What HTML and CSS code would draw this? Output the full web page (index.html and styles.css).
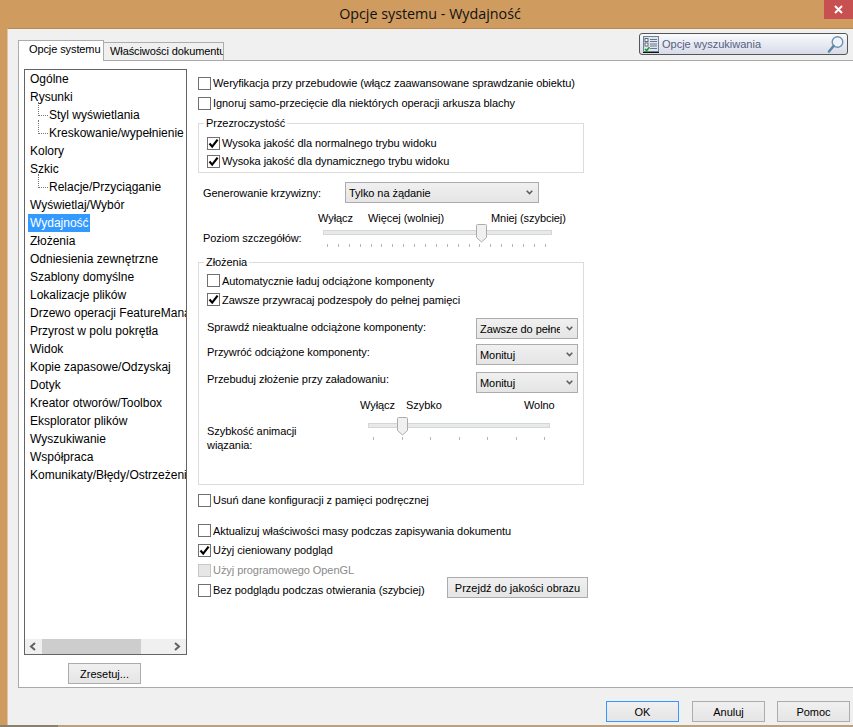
FILE: index.html
```html
<!DOCTYPE html>
<html lang="pl">
<head>
<meta charset="utf-8">
<title>Opcje systemu - Wydajność</title>
<link rel="stylesheet" href="styles.css">
</head>
<body>
<svg class="defs" width="0" height="0" aria-hidden="true">
  <symbol id="tick" viewBox="0 0 13 13"><path d="M2.5 6.5 L5.2 9.6 L10.6 2.6" fill="none" stroke="#000" stroke-width="2.2"/></symbol>
  <symbol id="chev" viewBox="0 0 7 5"><path d="M.7 .7 L3.5 3.6 L6.3 .7" fill="none" stroke="#606060" stroke-width="1.6"/></symbol>
  <symbol id="thumb" viewBox="0 0 11 19"><path d="M.5 1.5 Q.5 .5 1.5 .5 H9.5 Q10.5 .5 10.5 1.5 V13.5 L5.5 18 L.5 13.5 Z" fill="#f0f0f0" stroke="#acacac"/></symbol>
</svg>

<header class="titlebar">
  <h1 class="title">Opcje systemu - Wydajność</h1>
  <button class="close" aria-label="Zamknij"><svg width="9" height="9" viewBox="0 0 9 9"><path d="M1 1 L8 8 M8 1 L1 8" stroke="#fff" stroke-width="2"/></svg></button>
</header>

<div class="window">
  <div class="topbar">
    <div class="tab active">Opcje systemu</div>
    <div class="tab">Właściwości dokumentu</div>
    <div class="search">
      <svg class="search-icon" width="16" height="17" viewBox="0 0 16 17">
        <rect x=".5" y=".5" width="15" height="15" fill="#dfe6ee" stroke="#6d8296"/>
        <rect x="2" y="2.5" width="3" height="3" fill="#fff" stroke="#667"/>
        <rect x="2" y="7" width="3" height="3" fill="#fff" stroke="#667"/>
        <path d="M7 3.5 H14 M7 5.5 H14 M7 8 H14 M7 10 H14 M7 12.5 H14" stroke="#66788a"/>
        <path d="M2 13 L3.6 14.6 L6.4 11.2" fill="none" stroke="#12a02a" stroke-width="1.6"/>
        <path d="M0 16.5 H16" stroke="#111"/>
      </svg>
      <span class="search-text">Opcje wyszukiwania</span>
      <svg class="search-glass" width="17" height="19" viewBox="0 0 17 19">
        <circle cx="10.5" cy="7" r="5.3" fill="#eef4fa" stroke="#6f93ad" stroke-width="1.4"/>
        <path d="M6.6 11 L2 16.5" stroke="#5f86a5" stroke-width="2.6" stroke-linecap="round"/>
      </svg>
    </div>
  </div>

  <div class="panel">
    <div class="side">
      <div class="tree">
        <ul class="tree-list">
          <li>Ogólne</li>
          <li>Rysunki</li>
          <li class="sub">Styl wyświetlania</li>
          <li class="sub">Kreskowanie/wypełnienie</li>
          <li>Kolory</li>
          <li>Szkic</li>
          <li class="sub">Relacje/Przyciąganie</li>
          <li>Wyświetlaj/Wybór</li>
          <li><span class="selected">Wydajność</span></li>
          <li>Złożenia</li>
          <li>Odniesienia zewnętrzne</li>
          <li>Szablony domyślne</li>
          <li>Lokalizacje plików</li>
          <li>Drzewo operacji FeatureManager</li>
          <li>Przyrost w polu pokrętła</li>
          <li>Widok</li>
          <li>Kopie zapasowe/Odzyskaj</li>
          <li>Dotyk</li>
          <li>Kreator otworów/Toolbox</li>
          <li>Eksplorator plików</li>
          <li>Wyszukiwanie</li>
          <li>Współpraca</li>
          <li>Komunikaty/Błędy/Ostrzeżenia</li>
        </ul>
        <div class="hscroll">
          <svg class="arrow" width="8" height="9" viewBox="0 0 8 9"><path d="M6 1 L2 4.5 L6 8" fill="none" stroke="#606060" stroke-width="2"/></svg>
          <div class="track"><div class="thumb-h"></div></div>
          <svg class="arrow" width="8" height="9" viewBox="0 0 8 9"><path d="M2 1 L6 4.5 L2 8" fill="none" stroke="#606060" stroke-width="2"/></svg>
        </div>
      </div>
      <button class="btn reset">Zresetuj...</button>
    </div>

    <div class="options">
      <label class="check"><span class="cb"></span>Weryfikacja przy przebudowie (włącz zaawansowane sprawdzanie obiektu)</label>
      <label class="check"><span class="cb"></span>Ignoruj samo-przecięcie dla niektórych operacji arkusza blachy</label>

      <fieldset class="group g-transp">
        <legend>Przezroczystość</legend>
        <label class="check tight"><span class="cb"><svg width="13" height="13"><use href="#tick"/></svg></span>Wysoka jakość dla normalnego trybu widoku</label>
        <label class="check tight"><span class="cb"><svg width="13" height="13"><use href="#tick"/></svg></span>Wysoka jakość dla dynamicznego trybu widoku</label>
      </fieldset>

      <div class="curve-row">
        <span class="curve-label">Generowanie krzywizny:</span>
        <div class="select wide"><span class="select-text">Tylko na żądanie</span><svg width="7" height="5"><use href="#chev"/></svg></div>
      </div>

      <div class="scale scale-detail">
        <span>Wyłącz</span><span>Więcej (wolniej)</span><span>Mniej (szybciej)</span>
      </div>
      <div class="slider-row detail-row">
        <span class="slider-label">Poziom szczegółów:</span>
        <div class="slider s-detail">
          <div class="rail"></div>
          <svg class="knob" width="11" height="19"><use href="#thumb"/></svg>
          <div class="ticks">
            <i></i><i></i><i></i><i></i><i></i><i></i><i></i><i></i><i></i><i></i><i></i><i></i><i></i><i></i><i></i><i></i><i></i><i></i><i></i><i></i><i></i>
          </div>
        </div>
      </div>

      <fieldset class="group g-asm">
        <legend>Złożenia</legend>
        <label class="check tight2"><span class="cb"></span>Automatycznie ładuj odciążone komponenty</label>
        <label class="check tight2"><span class="cb"><svg width="13" height="13"><use href="#tick"/></svg></span>Zawsze przywracaj podzespoły do pełnej pamięci</label>

        <div class="asm-row r1">
          <span>Sprawdź nieaktualne odciążone komponenty:</span>
          <div class="select"><span class="select-text">Zawsze do pełne</span><svg width="7" height="5"><use href="#chev"/></svg></div>
        </div>
        <div class="asm-row r2">
          <span>Przywróć odciążone komponenty:</span>
          <div class="select"><span class="select-text">Monituj</span><svg width="7" height="5"><use href="#chev"/></svg></div>
        </div>
        <div class="asm-row r3">
          <span>Przebuduj złożenie przy załadowaniu:</span>
          <div class="select"><span class="select-text">Monituj</span><svg width="7" height="5"><use href="#chev"/></svg></div>
        </div>

        <div class="scale scale-anim">
          <span>Wyłącz</span><span>Szybko</span><span>Wolno</span>
        </div>
        <div class="slider-row anim-row">
          <span class="slider-label anim-label">Szybkość animacji<br>wiązania:</span>
          <div class="slider s-anim">
            <div class="rail"></div>
            <svg class="knob" width="11" height="19"><use href="#thumb"/></svg>
            <div class="ticks"><i></i><i></i><i></i><i></i><i></i><i></i><i></i></div>
          </div>
        </div>
      </fieldset>

      <label class="check clear-cache"><span class="cb"></span>Usuń dane konfiguracji z pamięci podręcznej</label>
      <label class="check update-mass"><span class="cb"></span>Aktualizuj właściwości masy podczas zapisywania dokumentu</label>
      <label class="check"><span class="cb"><svg width="13" height="13"><use href="#tick"/></svg></span>Użyj cieniowany podgląd</label>
      <label class="check disabled"><span class="cb"></span>Użyj programowego OpenGL</label>
      <div class="last-row">
        <label class="check"><span class="cb"></span>Bez podglądu podczas otwierania (szybciej)</label>
        <button class="btn quality">Przejdź do jakości obrazu</button>
      </div>
    </div>
  </div>

  <footer class="actions">
    <button class="btn act primary">OK</button>
    <button class="btn act">Anuluj</button>
    <button class="btn act">Pomoc</button>
  </footer>
</div>
<div class="taskstrip"><span class="strip-a"></span><span class="strip-b"></span></div>
</body>
</html>
```
FILE: styles.css
```css
* { box-sizing: border-box; }
html, body { margin: 0; height: 100%; }
body {
  width: 853px; height: 727px; overflow: hidden;
  background: #cf9b5f;
  font-family: "Liberation Sans", "DejaVu Sans", sans-serif;
  font-size: 11px; line-height: 14px; color: #000;
  position: relative;
}
.defs { position: absolute; }
.titlebar { height: 28px; display: flex; justify-content: center; align-items: center; }
.title { margin: 0 0 0 7px; font-family: "Open Sans", sans-serif; font-weight: 400; font-size: 14.3px; color: #111; }
.close {
  position: absolute; top: 0; right: 0; width: 29px; height: 19px; padding: 0; border: 0;
  background: #c75050; display: flex; align-items: center; justify-content: center;
}

.window {
  margin-left: 7px; height: 697px; background: #f0f0f0;
  border-top: 1px solid #b88a55; border-left: 1px solid #dcc6a8;
}
.topbar { height: 31px; display: flex; align-items: flex-end; padding-left: 10px; position: relative; }
.tab {
  height: 18px; padding: 0 0 0 6px; margin-bottom: 0; background: #f0f0f0; letter-spacing: -.1px;
  border: 1px solid #acacac; border-bottom: 0; line-height: 17px; width: 121px; white-space: nowrap; overflow: hidden;
}
.tab.active {
  width: 86px; height: 21px; padding-left: 10px; background: #fff; margin-bottom: -1px; margin-right: -1px;
  position: relative; z-index: 1; line-height: 17px;
}
.search {
  margin: 0 5px 5px auto; width: 209px; height: 22px; display: flex; align-items: center;
  border: 1px solid #555; border-radius: 3px; padding: 0 3px 0 3px;
  background: linear-gradient(#fafbfd, #d7dbe8);
  align-self: flex-end;
}
.search-text { margin-left: 3px; color: #56607f; flex: 1; }

.panel {
  margin-left: 10px; height: 628px; background: #fff;
  border: 1px solid #a9a9a9; border-right: 0;
  display: flex;
}
.side { width: 179px; padding: 8px 0 0 5px; display: flex; flex-direction: column; }
.tree {
  width: 163px; height: 586px; border: 1px solid #646464; display: flex; flex-direction: column;
}
.tree-list { list-style: none; margin: 0; padding: 0 0 0 5px; flex: 1; overflow: hidden; white-space: nowrap; font-size: 12px; }
.tree-list li { height: 18px; line-height: 18px; }
.tree-list .sub {
  padding-left: 19px; position: relative;
}
.tree-list .sub::before {
  content: ""; position: absolute; left: 8px; top: -4px; width: 9px; height: 13px;
  border-left: 1px dotted #777; border-bottom: 1px dotted #777;
}
.selected { display: inline-block; background: #3399ff; color: #fff; width: 62px; margin-left: -2px; padding-left: 2px; }
.hscroll { height: 15px; display: flex; align-items: center; background: #f0f0f0; flex: none; }
.arrow { flex: none; margin: 0 5px 0 4px; }
.track { flex: 1; height: 15px; }
.thumb-h { width: 99px; height: 15px; background: #cdcdcd; }
.btn {
  font: inherit; color: #000; padding: 0; height: 21px;
  border: 1px solid #acacac;
  background: linear-gradient(#f0f0f0, #e5e5e5);
}
.reset { width: 73px; margin: 8px 0 0 44px; }

.options { width: 400px; padding-top: 12px; margin-left: 0; letter-spacing: -.06px; }
.check { display: flex; align-items: center; height: 20px; white-space: nowrap; gap: 2px; }
.check.tight { height: 18px; }
.check.tight2 { height: 19px; }
.cb {
  width: 13px; height: 13px; flex: none; border: 1px solid #707070; background: #fff; display: block; position: relative;
}
.cb svg { position: absolute; left: -1px; top: -1px; }
.check.disabled { color: #8a8a8a; }
.check.disabled .cb { background: #e6e6e6; border-color: #c6c6c6; }

.group { margin: 0; padding: 0; min-width: 0; border: 1px solid #dcdcdc; width: 386px; }
.group legend { padding: 0 2px; margin-left: -3px; line-height: 14px; }
.g-transp { margin-top: 3px; height: 57px; padding: 4px 0 0 8px; }
.curve-row { display: flex; align-items: center; margin: 9px 0 0 5px; }
.curve-label { width: 142px; }
.select {
  width: 102px; height: 21px; display: flex; align-items: center; justify-content: space-between;
  padding: 0 4px 0 3px; border: 1px solid #acacac;
  background: linear-gradient(#f0f0f0, #e5e5e5); flex: none;
}
.select.wide { width: 194px; padding-right: 5px; }
.select-text { width: 80px; overflow: hidden; white-space: nowrap; flex: none; }
.select.wide .select-text { width: 160px; }

.scale { display: flex; line-height: 14px; }
.scale-detail { margin: 8px 0 0 120px; height: 14px; }
.scale-detail span:nth-child(1) { width: 50px; }
.scale-detail span:nth-child(2) { width: 123px; }
.slider-row { display: flex; }
.detail-row { margin-left: 5px; height: 30px; }
.slider-label { flex: none; }
.detail-row .slider-label { width: 120px; padding-top: 6px; }
.slider { position: relative; flex: none; height: 30px; }
.rail { height: 5px; background: #e7eaea; border: 1px solid #d6d6d6; position: absolute; left: 0; right: 0; top: 0; }
.s-detail { width: 229px; margin-top: 4px; }
.s-detail .rail { top: 1px; }
.knob { position: absolute; }
.s-detail .knob { left: 153px; top: -5px; }
.ticks { position: absolute; display: flex; justify-content: space-between; height: 3px; }
.ticks i { width: 1px; height: 3px; background: #b5b5b5; display: block; }
.s-detail .ticks { left: 4px; right: 6px; top: 15px; }
.s-anim { width: 182px; margin-left: 27px; }
.s-anim .rail { top: 3px; }
.s-anim .knob { left: 29px; top: -3px; }
.s-anim .ticks { left: 5px; right: 5px; top: 17px; }

.g-asm { height: 230px; margin-top: 0; padding: 2px 0 0 8px; }
.asm-row { display: flex; justify-content: space-between; align-items: center; width: 371px; }
.asm-row > span:first-child { margin-bottom: 3px; }
.r1 { margin-top: 9px; }
.r2 { margin-top: 5px; }
.r2 > span:first-child { margin-bottom: 5px; }
.r3 { margin-top: 7px; }
.r3 > span:first-child { margin-bottom: 7px; }
.scale-anim { margin: 5px 0 0 153px; }
.scale-anim span:nth-child(1) { width: 46px; }
.scale-anim span:nth-child(2) { width: 118px; }
.anim-row { margin-top: 8px; }
.anim-label { width: 134px; padding-top: 4px; }

.clear-cache { margin-top: 5px; }
.update-mass { margin-top: 11px; height: 19px; }
.last-row { display: flex; justify-content: flex-start; height: 20px; }
.last-row .check { width: 249px; }
.quality { width: 141px; flex: none; margin-top: -3px; }
.quality { height: 21px; }

.actions { display: flex; margin-top: 13px; padding-left: 598px; }
.act { width: 73px; flex: none; margin-right: 13px; font-size: 11px; }
.act:nth-child(2) { margin-right: 12px; }
.act:last-child { margin-right: 0; }
.primary { border-color: #3399ff; }
.taskstrip { position: absolute; left: 0; right: 0; bottom: 0; height: 2px; display: flex; }
.strip-a { width: 58px; background: #8a8070; }
.strip-b { flex: 1; background: #b8a080; }
```
